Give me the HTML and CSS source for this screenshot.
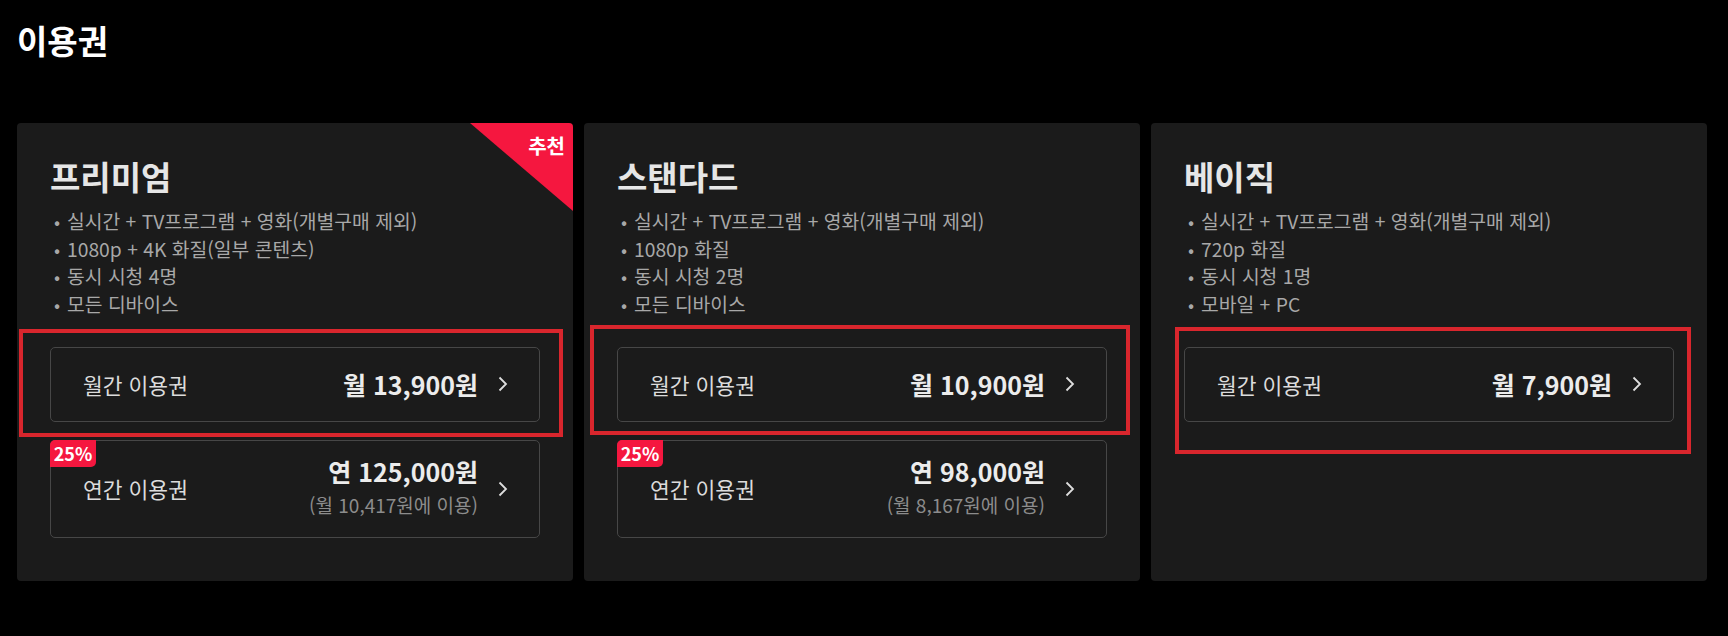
FILE: index.html
```html
<!DOCTYPE html>
<html lang="ko">
  <head>
    <meta charset="UTF-8" />
    <meta name="viewport" content="width=device-width, initial-scale=1.0" />
    <title>이용권</title>
    <link rel="stylesheet" href="styles.css">
  </head>

  <body>
    <h1 class="page-title">이용권</h1>

    <div class="plans">
      <!-- 프리미엄 -->
      <div class="plan">
        <div class="ribbon"><span>추천</span></div>
        <h2 class="plan-name">프리미엄</h2>
        <ul class="features">
          <li>실시간 + TV프로그램 + 영화(개별구매 제외)</li>
          <li>1080p + 4K 화질(일부 콘텐츠)</li>
          <li>동시 시청 4명</li>
          <li>모든 디바이스</li>
        </ul>
        <a class="option">
          <span class="option-label">월간 이용권</span>
          <span class="option-price"><strong>월 13,900원</strong></span>
          <svg class="chevron" viewBox="0 0 10 16"><path d="M1.5 1.5 L8 8 L1.5 14.5" /></svg>
        </a>
        <a class="option option-year">
          <span class="badge">25%</span>
          <span class="option-label">연간 이용권</span>
          <span class="option-price">
            <strong>연 125,000원</strong>
            <small>(월 10,417원에 이용)</small>
          </span>
          <svg class="chevron" viewBox="0 0 10 16"><path d="M1.5 1.5 L8 8 L1.5 14.5" /></svg>
        </a>
        <div class="mark mark-1"></div>
      </div>

      <!-- 스탠다드 -->
      <div class="plan">
        <h2 class="plan-name">스탠다드</h2>
        <ul class="features">
          <li>실시간 + TV프로그램 + 영화(개별구매 제외)</li>
          <li>1080p 화질</li>
          <li>동시 시청 2명</li>
          <li>모든 디바이스</li>
        </ul>
        <a class="option">
          <span class="option-label">월간 이용권</span>
          <span class="option-price"><strong>월 10,900원</strong></span>
          <svg class="chevron" viewBox="0 0 10 16"><path d="M1.5 1.5 L8 8 L1.5 14.5" /></svg>
        </a>
        <a class="option option-year">
          <span class="badge">25%</span>
          <span class="option-label">연간 이용권</span>
          <span class="option-price">
            <strong>연 98,000원</strong>
            <small>(월 8,167원에 이용)</small>
          </span>
          <svg class="chevron" viewBox="0 0 10 16"><path d="M1.5 1.5 L8 8 L1.5 14.5" /></svg>
        </a>
        <div class="mark mark-2"></div>
      </div>

      <!-- 베이직 -->
      <div class="plan">
        <h2 class="plan-name">베이직</h2>
        <ul class="features">
          <li>실시간 + TV프로그램 + 영화(개별구매 제외)</li>
          <li>720p 화질</li>
          <li>동시 시청 1명</li>
          <li>모바일 + PC</li>
        </ul>
        <a class="option">
          <span class="option-label">월간 이용권</span>
          <span class="option-price"><strong>월 7,900원</strong></span>
          <svg class="chevron" viewBox="0 0 10 16"><path d="M1.5 1.5 L8 8 L1.5 14.5" /></svg>
        </a>
        <div class="mark mark-3"></div>
      </div>
    </div>
  </body>
</html>
```

FILE: styles.css
```css
* {
  margin: 0;
  padding: 0;
  box-sizing: border-box;
  font-family: "Noto Sans CJK KR", "Noto Sans", sans-serif;
}

body {
  background-color: #000;
  color: #fff;
  min-height: 100vh;
}

.page-title {
  font-size: 33px;
  font-weight: 700;
  line-height: 40px;
  padding: 20px 0 0 17px;
  color: #fff;
}

.plans {
  display: grid;
  grid-template-columns: repeat(3, 556px);
  gap: 11px;
  padding: 63px 0 0 17px;
}

.plan {
  position: relative;
  background-color: #1b1b1b;
  border-radius: 4px;
  overflow: hidden;
  padding: 33px 33px 42px;
  height: 458px;
}

.ribbon {
  position: absolute;
  top: 0;
  right: 0;
  width: 103px;
  height: 88px;
  background-color: #f5173f;
  clip-path: polygon(0 0, 100% 0, 100% 100%);
}

.ribbon span {
  position: absolute;
  top: 9px;
  right: 8px;
  font-size: 20px;
  font-weight: 700;
  line-height: 28px;
  color: #fff;
}

.plan-name {
  font-size: 33px;
  font-weight: 700;
  line-height: 40px;
  color: #e6e6e6;
}

.features {
  list-style: none;
  margin-top: 12px;
}

.features li {
  position: relative;
  padding-left: 17px;
  font-size: 19.3px;
  line-height: 27.7px;
  color: #a8a8a8;
}

.features li::before {
  content: "•";
  position: absolute;
  left: 4px;
  font-size: 18px;
}

.option {
  position: relative;
  display: flex;
  align-items: center;
  height: 75px;
  margin-top: 28px;
  padding: 0 31px 0 32px;
  border: 1px solid #474747;
  border-radius: 5px;
}

.option-year {
  height: 98px;
  margin-top: 18px;
}

.option-label {
  flex: 1;
  font-size: 21.5px;
  color: #dcdcdc;
}

.option-price {
  display: flex;
  flex-direction: column;
  align-items: flex-end;
}

.option-price strong {
  font-size: 25px;
  font-weight: 700;
  line-height: 32px;
  color: #ececec;
}

.option-price small {
  font-size: 19px;
  line-height: 36px;
  color: #8c8c8c;
}

.chevron {
  width: 10px;
  height: 16px;
  margin-left: 20px;
  fill: none;
  stroke: #dedede;
  stroke-width: 1.8;
}

.badge {
  position: absolute;
  top: -1px;
  left: -1px;
  width: 46px;
  height: 27px;
  background-color: #f5173f;
  border-radius: 5px 0 5px 0;
  font-size: 18px;
  font-weight: 700;
  line-height: 27px;
  text-align: center;
  color: #fff;
}

/* 빨간 표시 박스 */
.mark {
  position: absolute;
  border: 4px solid #d9262d;
  pointer-events: none;
}

.mark-1 {
  top: 206px;
  left: 2px;
  width: 544px;
  height: 108px;
}

.mark-2 {
  top: 202px;
  left: 6px;
  width: 540px;
  height: 110px;
}

.mark-3 {
  top: 204px;
  left: 24px;
  width: 516px;
  height: 127px;
}
```
